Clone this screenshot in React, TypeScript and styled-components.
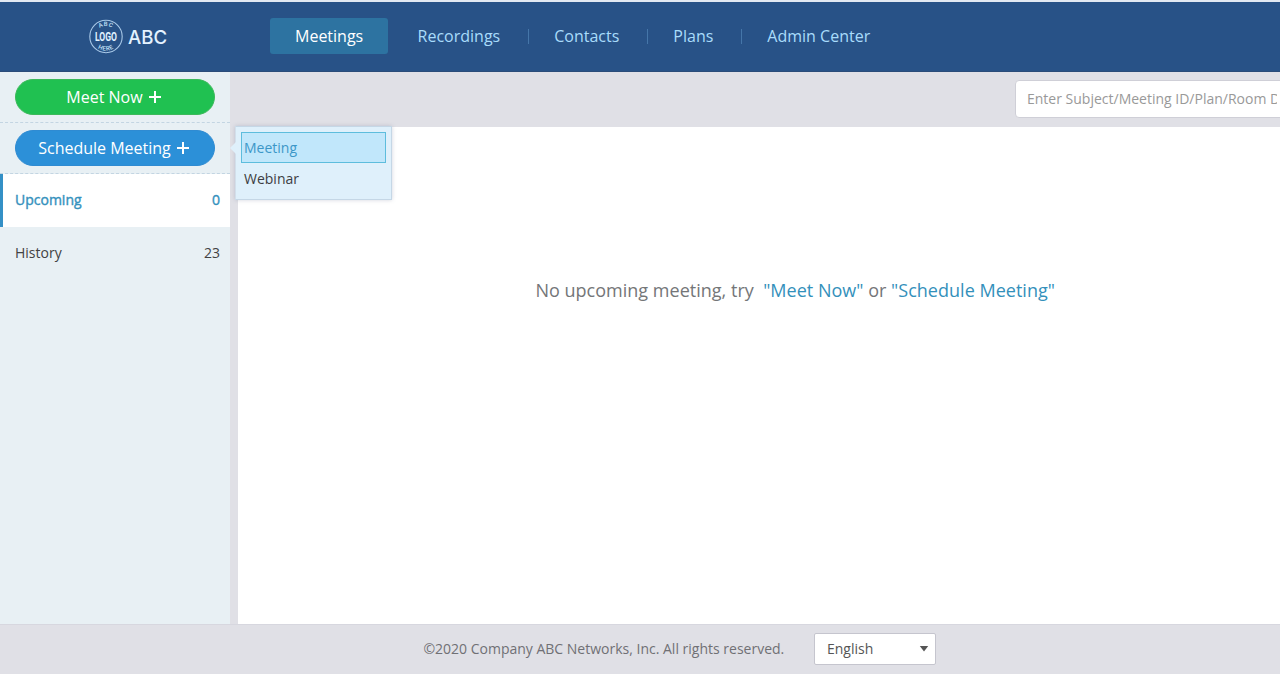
import React from "react";
import styled, { createGlobalStyle, css } from "styled-components";

const GlobalStyle = createGlobalStyle`
  * { box-sizing: border-box; }
  body {
    margin: 0;
    overflow: hidden;
    background: #e0e0e6;
    font-family: "Open Sans", sans-serif;
    font-size: 14px;
    color: #444;
  }
`;

const Page = styled.div`
  display: flex;
  flex-direction: column;
  width: 100%;
  height: 674px;
  overflow: hidden;
`;

const Header = styled.header`
  display: flex;
  flex: none;
  height: 72px;
  padding-top: 16px;
  background: #285287;
  border-top: 2px solid #e2e9f2;
  border-bottom: 1px solid #2b4c79;
`;

const Brand = styled.div`
  display: flex;
  align-items: center;
  flex: none;
  width: 270px;
  height: 36px;
  padding-left: 88px;
`;

const BrandName = styled.span`
  margin: 2px 0 0 4px;
  font: 500 18.6px/24px Inter, sans-serif;
  color: #e4f2ff;
`;

const Nav = styled.nav`
  display: flex;
  align-items: center;
  height: 36px;
`;

const NavItem = styled.a<{ $active?: boolean }>`
  height: 36px;
  padding: 0 25px;
  font-size: 16px;
  line-height: 36px;
  white-space: nowrap;
  color: #a9dcfb;
  ${(p) =>
    p.$active &&
    css`
      width: 118px;
      margin-right: 4.6px;
      border-radius: 3px;
      background: #2d73a1;
      color: #fff;
    `}
`;

const NavDivider = styled.span`
  width: 1px;
  height: 15px;
  margin-left: 3px;
  background: #4576a9;
`;

const Body = styled.div`
  display: flex;
  flex: 1;
  min-height: 0;
`;

const Sidebar = styled.aside`
  position: relative;
  flex: none;
  width: 230px;
  background: #e8f0f4;
`;

const ActionRow = styled.div`
  height: 51px;
  padding: 7px 15px;
  border-bottom: 1px dashed #c3d5e2;
`;

const ActionButton = styled.button<{ $tone: "green" | "blue" }>`
  display: flex;
  align-items: center;
  justify-content: center;
  gap: 6px;
  width: 200px;
  height: 36px;
  padding: 0 3px 0 0;
  border: 1px solid ${(p) => (p.$tone === "green" ? "#3cb95a" : "#2f8bd2")};
  border-radius: 18px;
  background: ${(p) => (p.$tone === "green" ? "#20c151" : "#2c90d8")};
  color: #fff;
  font: 16px/34px "Open Sans", sans-serif;
  white-space: nowrap;
`;

const SideItem = styled.div<{ $active?: boolean }>`
  display: flex;
  justify-content: space-between;
  height: 53px;
  padding: 0 10px 0 12px;
  border-left: 3px solid ${(p) => (p.$active ? "#3490c6" : "transparent")};
  background: ${(p) => (p.$active ? "#fff" : "transparent")};
  color: ${(p) => (p.$active ? "#3591bd" : "#424242")};
  line-height: 51px;
  -webkit-text-stroke: ${(p) => (p.$active ? "0.4px #3591bd" : "0")};
`;

const Popover = styled.div`
  position: absolute;
  z-index: 2;
  top: 54px;
  left: 235px;
  width: 157px;
  height: 74px;
  padding: 5px;
  border: 1px solid #c5d7e6;
  border-left-color: #d2dfeb;
  background: #dff0fb;
  box-shadow: 0 0 4px rgba(100, 110, 140, 0.3);
`;

const PopoverArrow = styled.span`
  position: absolute;
  top: 15px;
  left: -6px;
  border: solid transparent;
  border-width: 6px 6px 6px 0;
  border-right-color: #dff0fb;
`;

const MenuItem = styled.div<{ $selected?: boolean }>`
  width: 145px;
  height: 31px;
  padding-left: 2px;
  border: 1px solid ${(p) => (p.$selected ? "#5dbddd" : "transparent")};
  background: ${(p) => (p.$selected ? "#c1e7fb" : "transparent")};
  color: ${(p) => (p.$selected ? "#3c97c8" : "#3d3d42")};
  line-height: 30px;
`;

const Main = styled.main`
  display: flex;
  flex: 1;
  flex-direction: column;
  min-width: 0;
`;

const SearchBar = styled.div`
  display: flex;
  justify-content: flex-end;
  flex: none;
  height: 55px;
  padding-top: 8px;
`;

const SearchInput = styled.input`
  width: 275px;
  height: 38px;
  margin-right: -10px;
  padding: 0 12px 2px 11px;
  border: 1px solid #cfcfd7;
  border-radius: 4px;
  background: #fff;
  color: #444;
  font: 14px "Open Sans", sans-serif;
  &::placeholder { color: #999; }
`;

const Content = styled.section`
  flex: 1;
  margin-left: 8px;
  padding: 151px 0 0 297.4px;
  background: #fff;
  font-size: 18px;
  line-height: 25px;
  letter-spacing: 0.015px;
  white-space: pre;
  color: #747678;
`;

const TextLink = styled.a`
  color: #3390bb;
`;

const Footer = styled.footer`
  display: flex;
  flex: none;
  align-items: center;
  height: 50px;
  padding: 0 0 2px 423.4px;
  border-top: 1px solid #d7d7df;
  color: #707075;
`;

const Copyright = styled.span`
  width: 390.6px;
  white-space: nowrap;
`;

const LanguageSelect = styled.div`
  display: flex;
  align-items: center;
  justify-content: space-between;
  width: 122px;
  height: 32px;
  padding: 0 6px 0 12px;
  border: 1px solid #c5c5ce;
  border-radius: 2px;
  background: #fff;
  color: #555;
`;

const PlusIcon = () => (
  <svg width="12" height="12" viewBox="0 0 12 12" shapeRendering="crispEdges">
    <path d="M6 0v12M0 6h12" stroke="#fff" strokeWidth="2" fill="none" />
  </svg>
);

const LogoMark = () => (
  <svg width="36" height="36" viewBox="0 0 36 36" overflow="visible">
    <defs>
      <path id="logoTop" d="M7.4 18.5a10.6 10.6 0 0 1 21.2 0" />
      <path id="logoBottom" d="M3.8 18.5a14.2 14.2 0 0 0 28.4 0" />
    </defs>
    <circle cx="18" cy="18.5" r="16.2" fill="none" stroke="#a9c9e8" strokeWidth="1.1" />
    <g fill="#c6e2f8" textAnchor="middle" fontFamily="Roboto, sans-serif" fontWeight="500">
      <text fontSize="6" letterSpacing="0.7">
        <textPath href="#logoTop" startOffset="50%">ABC</textPath>
      </text>
      <text x="18" y="23" fontSize="13.5" fontWeight="700" textLength="22" lengthAdjust="spacingAndGlyphs" fill="#e0f1ff">
        LOGO
      </text>
      <text fontSize="6" letterSpacing="0.6">
        <textPath href="#logoBottom" startOffset="50%">HERE</textPath>
      </text>
    </g>
  </svg>
);

const CaretIcon = () => (
  <svg width="10" height="6" viewBox="0 0 10 6">
    <path d="M0.8 0h8.4L5 5.6z" fill="#555" />
  </svg>
);

export default function App() {
  return (
    <Page>
      <GlobalStyle />
      <Header>
        <Brand>
          <LogoMark />
          <BrandName>ABC</BrandName>
        </Brand>
        <Nav>
          <NavItem $active>Meetings</NavItem>
          <NavItem>Recordings</NavItem>
          <NavDivider />
          <NavItem>Contacts</NavItem>
          <NavDivider />
          <NavItem>Plans</NavItem>
          <NavDivider />
          <NavItem>Admin Center</NavItem>
        </Nav>
      </Header>
      <Body>
        <Sidebar>
          <ActionRow>
            <ActionButton $tone="green">
              Meet Now <PlusIcon />
            </ActionButton>
          </ActionRow>
          <ActionRow>
            <ActionButton $tone="blue">
              Schedule Meeting <PlusIcon />
            </ActionButton>
          </ActionRow>
          <SideItem $active>
            <span>Upcoming</span>
            <span>0</span>
          </SideItem>
          <SideItem>
            <span>History</span>
            <span>23</span>
          </SideItem>
          <Popover>
            <PopoverArrow />
            <MenuItem $selected>Meeting</MenuItem>
            <MenuItem>Webinar</MenuItem>
          </Popover>
        </Sidebar>
        <Main>
          <SearchBar>
            <SearchInput placeholder="Enter Subject/Meeting ID/Plan/Room Detail" />
          </SearchBar>
          <Content>
            No upcoming meeting, try{"  "}
            <TextLink>"Meet Now"</TextLink> or <TextLink>"Schedule Meeting"</TextLink>
          </Content>
        </Main>
      </Body>
      <Footer>
        <Copyright>©2020 Company ABC Networks, Inc. All rights reserved.</Copyright>
        <LanguageSelect>
          English <CaretIcon />
        </LanguageSelect>
      </Footer>
    </Page>
  );
}
